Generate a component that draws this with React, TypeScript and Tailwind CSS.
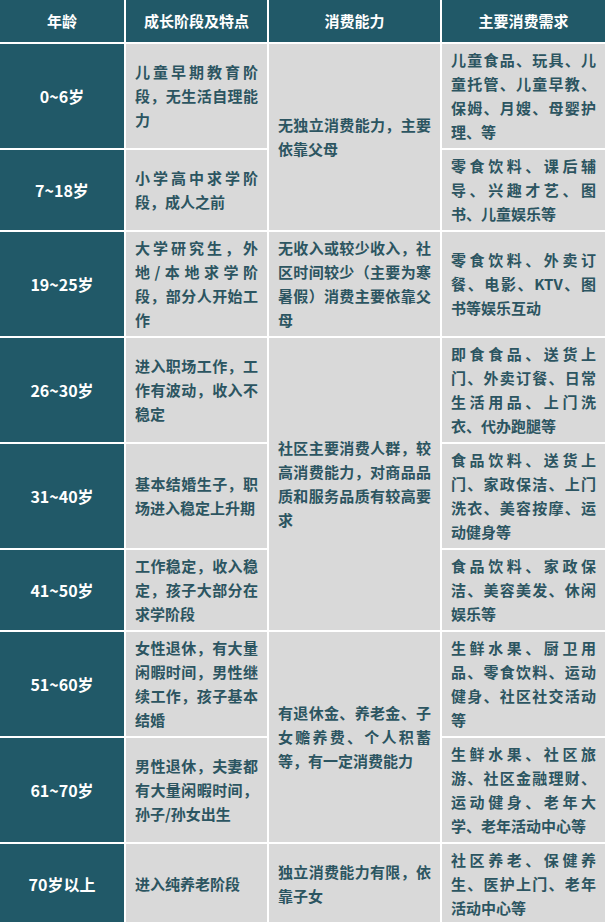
import React from "react";

type Cell = { lines: string[]; row: number; span?: number };

const rows: { age: string; stage: string[]; need: string[] }[] = [
  { age: "0~6岁", stage: ["儿童早期教育阶", "段，无生活自理能", "力"], need: ["儿童食品、玩具、儿", "童托管、儿童早教、", "保姆、月嫂、母婴护", "理、等"] },
  { age: "7~18岁", stage: ["小学高中求学阶", "段，成人之前"], need: ["零食饮料、课后辅", "导、兴趣才艺、图", "书、儿童娱乐等"] },
  { age: "19~25岁", stage: ["大学研究生，外", "地/本地求学阶", "段，部分人开始工", "作"], need: ["零食饮料、外卖订", "餐、电影、KTV、图", "书等娱乐互动"] },
  { age: "26~30岁", stage: ["进入职场工作，工", "作有波动，收入不", "稳定"], need: ["即食食品、送货上", "门、外卖订餐、日常", "生活用品、上门洗", "衣、代办跑腿等"] },
  { age: "31~40岁", stage: ["基本结婚生子，职", "场进入稳定上升期"], need: ["食品饮料、送货上", "门、家政保洁、上门", "洗衣、美容按摩、运", "动健身等"] },
  { age: "41~50岁", stage: ["工作稳定，收入稳", "定，孩子大部分在", "求学阶段"], need: ["食品饮料、家政保", "洁、美容美发、休闲", "娱乐等"] },
  { age: "51~60岁", stage: ["女性退休，有大量", "闲暇时间，男性继", "续工作，孩子基本", "结婚"], need: ["生鲜水果、厨卫用", "品、零食饮料、运动", "健身、社区社交活动", "等"] },
  { age: "61~70岁", stage: ["男性退休，夫妻都", "有大量闲暇时间，", "孙子/孙女出生"], need: ["生鲜水果、社区旅", "游、社区金融理财、", "运动健身、老年大", "学、老年活动中心等"] },
  { age: "70岁以上", stage: ["进入纯养老阶段"], need: ["社区养老、保健养", "生、医护上门、老年", "活动中心等"] },
];

const ability: Cell[] = [
  { lines: ["无独立消费能力，主要", "依靠父母"], row: 2, span: 2 },
  { lines: ["无收入或较少收入，社", "区时间较少（主要为寒", "暑假）消费主要依靠父", "母"], row: 4 },
  { lines: ["社区主要消费人群，较", "高消费能力，对商品品", "质和服务品质有较高要", "求"], row: 5, span: 3 },
  { lines: ["有退休金、养老金、子", "女赡养费、个人积蓄", "等，有一定消费能力"], row: 8, span: 2 },
  { lines: ["独立消费能力有限，依", "靠子女"], row: 10 },
];

const spanClass: Record<number, string> = {
  1: "row-span-1",
  2: "row-span-2",
  3: "row-span-3",
};
const rowStart: Record<number, string> = {
  1: "row-start-1",
  2: "row-start-2",
  3: "row-start-3",
  4: "row-start-4",
  5: "row-start-5",
  6: "row-start-6",
  7: "row-start-7",
  8: "row-start-8",
  9: "row-start-9",
  10: "row-start-10",
};

function Lines({ lines }: { lines: string[] }) {
  return (
    <>
      {lines.map((l, i) => (
        <div
          key={i}
          className={
            i < lines.length - 1
              ? "whitespace-nowrap text-justify [text-align-last:justify]"
              : "whitespace-nowrap text-left"
          }
        >
          {l}
        </div>
      ))}
    </>
  );
}

const gray = "bg-[#d9d9d9] text-[#2c5561] px-[9px] py-[4px] flex flex-col justify-center";

export default function App() {
  return (
    <div
      className="w-[605px] bg-white grid grid-cols-[124px_141px_171px_1fr] gap-[2px] text-[15px] leading-[24px] font-bold"
      style={{ fontFamily: '"Noto Sans CJK SC", "Noto Sans", sans-serif' }}
    >
      {["年龄", "成长阶段及特点", "消费能力", "主要消费需求"].map((h, i) => (
        <div
          key={h}
          className="row-start-1 bg-[#215968] text-white text-center py-[9px] text-[15px]"
          style={{ gridColumnStart: i + 1 }}
        >
          {h}
        </div>
      ))}
      {rows.map((r, i) => (
        <React.Fragment key={r.age}>
          <div
            className={`${rowStart[i + 2]} col-start-1 bg-[#215968] text-white text-[16px] flex items-center justify-center`}
          >
            {r.age}
          </div>
          <div className={`${rowStart[i + 2]} col-start-2 ${gray}`}>
            <Lines lines={r.stage} />
          </div>
          <div className={`${rowStart[i + 2]} col-start-4 ${gray}`}>
            <Lines lines={r.need} />
          </div>
        </React.Fragment>
      ))}
      {ability.map((c) => (
        <div
          key={c.row}
          className={`${rowStart[c.row]} ${spanClass[c.span ?? 1]} col-start-3 ${gray}`}
        >
          <Lines lines={c.lines} />
        </div>
      ))}
    </div>
  );
}
